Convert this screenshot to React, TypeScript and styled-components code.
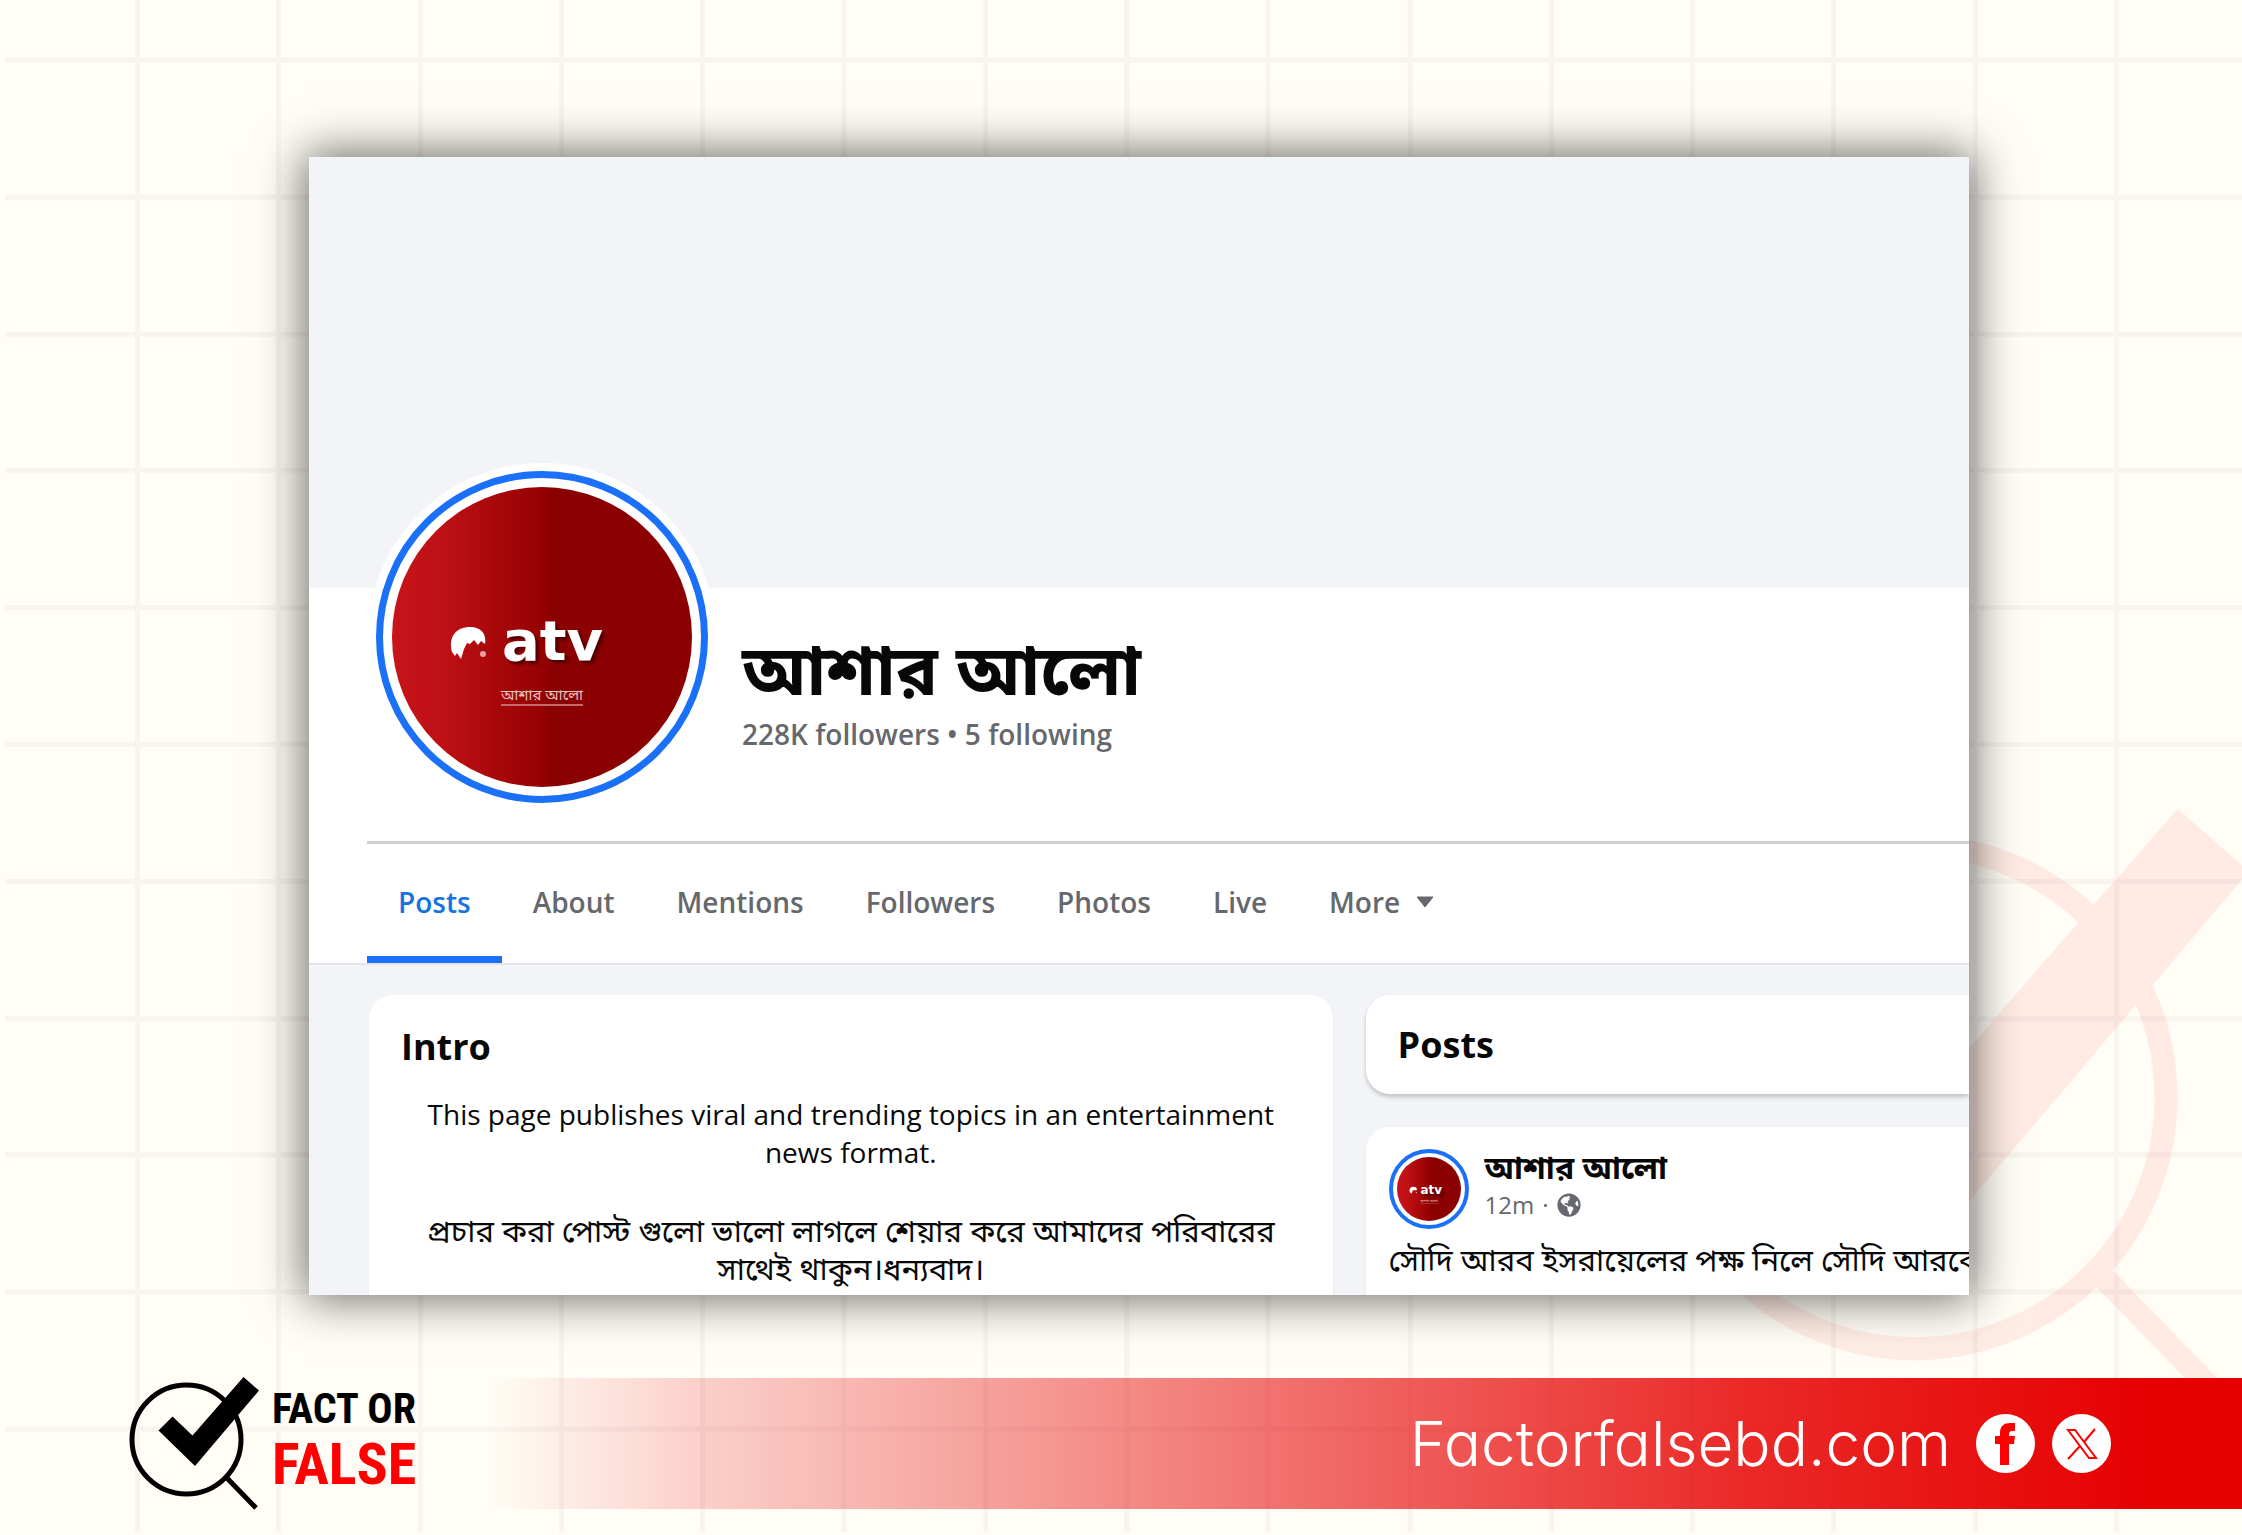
import React from "react";
import styled, { createGlobalStyle } from "styled-components";
import { FaGlobeAmericas } from "react-icons/fa";

const sans = `"Open Sans", "Noto Sans", "Noto Sans Bengali", "Liberation Sans", sans-serif`;

const GlobalStyle = createGlobalStyle`
  *, *::before, *::after { box-sizing: border-box; }
  body {
    margin: 0;
    background: #fffdf5;
    font-family: ${sans};
    color: #080809;
  }
  h1, h2, h3, p { margin: 0; }
  a { color: inherit; text-decoration: none; }
`;

const Page = styled.div`
  position: relative;
  display: flex;
  flex-direction: column;
  min-height: 100vh;
  padding: 157px 0 27px;
  overflow: hidden;
`;

const Backdrop = styled.svg`
  position: absolute;
  inset: 0;
  width: 100%;
  height: 100%;
`;

const Sheet = styled.main`
  position: relative;
  margin: 0 273px 0 309px;
  overflow: hidden;
  background: #f2f4f8;
  box-shadow: 0 0 44px 4px rgba(0, 0, 0, 0.58);
`;

const Cover = styled.div`
  height: 431px;
  background: #f2f4f8;
`;

const Header = styled.header`
  background: #fff;
  border-bottom: 2px solid #e3e5ea;
`;

const Profile = styled.div`
  display: flex;
  gap: 26px;
  padding: 0 32px 30px 59px;
`;

const AvatarRing = styled.div<{ $size: number; $ring: number; $gap: number; $edge: number }>`
  flex: none;
  display: flex;
  width: ${(p) => p.$size}px;
  height: ${(p) => p.$size}px;
  padding: ${(p) => p.$gap}px;
  border: ${(p) => p.$ring}px solid #1b70f8;
  border-radius: 50%;
  background: #fff;
  box-shadow: 0 0 0 ${(p) => p.$edge}px #fff;
`;

const ProfileAvatar = styled.div`
  margin-top: -125px;
  padding: 8px;
`;

const AvatarImage = styled.svg`
  width: 100%;
  height: 100%;
  border-radius: 50%;
`;

const Identity = styled.div`
  padding-top: 36px;
`;

const PageName = styled.h1`
  font-size: 70px;
  line-height: 88px;
  font-weight: 700;
`;

const Counts = styled.p`
  font-size: 28px;
  line-height: 44px;
  font-weight: 600;
  color: #65686c;
`;

const Tabs = styled.nav`
  display: flex;
  margin-left: 58px;
  border-top: 3px solid #ced0d4;
`;

const Tab = styled.a<{ $active?: boolean }>`
  display: flex;
  align-items: center;
  height: 119px;
  padding: 4px 31px 0;
  border-bottom: 7px solid ${(p) => (p.$active ? "#1b70f8" : "transparent")};
  font-size: 28px;
  line-height: 40px;
  font-weight: 600;
  color: ${(p) => (p.$active ? "#1673e0" : "#65686c")};
`;

const MoreTab = styled.button`
  display: flex;
  align-items: center;
  gap: 16px;
  height: 119px;
  padding: 4px 31px 0;
  border: 0;
  border-bottom: 7px solid transparent;
  background: none;
  font: 600 28px/40px ${sans};
  color: #65686c;
`;

const Columns = styled.div`
  display: grid;
  grid-template-columns: 963fr 603fr;
  gap: 33px;
  padding: 30px 0 0 60px;
`;

const Column = styled.div`
  display: flex;
  flex-direction: column;
  gap: 33px;
  min-width: 0;
`;

const Panel = styled.section<{ $open?: boolean; $side?: boolean }>`
  flex: ${(p) => (p.$open ? 1 : "none")};
  padding: ${(p) => (p.$side ? `22px 0 ${p.$open ? 10 : 22}px 23px` : "24px 32px 8px")};
  border-radius: ${(p) => (p.$side ? "24px 0 0 24px" : "24px")};
  ${(p) => p.$open && "border-bottom-left-radius: 0; border-bottom-right-radius: 0;"}
  background: #fff;
  box-shadow: 0 3px 4px rgba(0, 0, 0, ${(p) => (p.$open ? 0.04 : 0.2)});
`;

const PanelTitle = styled.h2<{ $inset?: boolean }>`
  padding-left: ${(p) => (p.$inset ? 9 : 0)}px;
  font-size: 36px;
  line-height: 55px;
  font-weight: 700;
`;

const Bio = styled.div`
  display: flex;
  flex-direction: column;
  gap: 40px;
  margin-top: 21px;
  font-size: 28px;
  line-height: 38px;
  text-align: center;
`;

const BengaliLine = styled.p`
  font-size: 31px;
`;

const PostHead = styled.div`
  display: flex;
  gap: 16px;
`;

const PostMeta = styled.div`
  display: flex;
  align-items: center;
  gap: 8px;
  font-size: 24px;
  line-height: 40px;
  color: #65686c;
`;

const PostAuthor = styled.h3`
  font-size: 32px;
  line-height: 36px;
  font-weight: 700;
`;

const PostText = styled.p`
  margin-top: 7px;
  font-size: 31px;
  line-height: 46px;
  white-space: nowrap;
  overflow: hidden;
`;

const Footer = styled.footer`
  position: relative;
  display: flex;
  margin-top: 83px;
`;

const Brand = styled.a`
  flex: none;
  display: flex;
  gap: 12px;
  width: 490px;
  padding-left: 129px;
`;

const BrandMark = styled.svg`
  width: 131px;
  height: 131px;
  overflow: visible;
`;

const BrandName = styled.span`
  display: flex;
  flex-direction: column;
  justify-content: center;
  padding-bottom: 10px;
  font-family: "Liberation Sans Narrow", "Roboto Condensed", "Liberation Sans", sans-serif;
  font-weight: 700;
  white-space: nowrap;
`;

const BrandFact = styled.span`
  font-size: 42px;
  line-height: 50px;
  color: #000;
`;

const BrandFalse = styled.span`
  font-size: 58px;
  line-height: 60px;
  color: #f00;
`;

const Band = styled.div`
  flex: 1;
  display: flex;
  align-items: center;
  justify-content: flex-end;
  gap: 17px;
  height: 131px;
  padding-right: 131px;
  background: linear-gradient(
    90deg,
    rgba(230, 0, 0, 0) 0%,
    rgba(230, 0, 0, 0.18) 12%,
    rgba(230, 0, 0, 0.62) 51%,
    rgba(230, 0, 0, 0.84) 72%,
    rgb(230, 0, 0) 95%
  );
`;

const Site = styled.a`
  margin-right: 8px;
  font-family: Inter, "Open Sans", sans-serif;
  font-feature-settings: "cv11";
  font-size: 62px;
  line-height: 72px;
  font-weight: 300;
  color: #fff;
`;

const Social = styled.a`
  display: flex;
  align-items: center;
  justify-content: center;
  width: 59px;
  height: 59px;
  border-radius: 50%;
  background: #fff;
  color: #f00;
`;

/* Magnifying glass with a tick, drawn on a 131 x 131 box */
function Mark() {
  return (
    <>
      <circle cx="57.5" cy="61.5" r="54.5" fill="none" stroke="currentColor" strokeWidth="5" />
      <path d="M114.5 -1 L130 12.5 L66 88 L29.5 52.5 L43.5 38.5 L63.5 57.5 Z" fill="currentColor" />
      <path d="M96 98 L127 130" stroke="currentColor" strokeWidth="5" />
    </>
  );
}

function AvatarArt({ id, label }: { id: string; label: string }) {
  return (
    <AvatarImage viewBox="0 0 300 300" role="img" aria-label={label}>
      <defs>
        <linearGradient id={id}>
          <stop offset="0" stopColor="#c8141a" />
          <stop offset="0.18" stopColor="#bd1015" />
          <stop offset="0.36" stopColor="#a60709" />
          <stop offset="0.5" stopColor="#960203" />
          <stop offset="0.53" stopColor="#8b0000" />
          <stop offset="1" stopColor="#8b0000" />
        </linearGradient>
      </defs>
      <rect width="300" height="300" fill={`url(#${id})`} />
      <path
        d="M60 165 C56 150 64 140 78 140 C89 140 95 147 93 157 L89 154 L86 158 L82 153 L78 157 L75 156 L72 162 L69 172 L65 166 L63 169 Z"
        fill="#fff"
      />
      <circle cx="91" cy="167" r="3" fill="#e8a0a0" />
      <g fontFamily="DejaVu Sans, sans-serif" fontWeight="700" fontSize="56">
        <text x="110" y="173" fill="#fff" style={{ textShadow: "3px 3px 3px #500000" }}>
          atv
        </text>
      </g>
      <text x="150" y="213" textAnchor="middle" fontFamily="Noto Sans Bengali, sans-serif" fontSize="15" fill="#e6c0c0">
        আশার আলো
      </text>
      <path d="M109 218 H191" stroke="#c46a6a" strokeWidth="2" />
    </AvatarImage>
  );
}

const columns = Array.from({ length: 15 }, (_, i) => 138 + Math.round((i * 1978) / 14));
const rows = Array.from({ length: 11 }, (_, i) => 60 + Math.round((i * 1368) / 10));

const tabs = ["Posts", "About", "Mentions", "Followers", "Photos", "Live"];

export default function App() {
  return (
    <Page>
      <GlobalStyle />
      <Backdrop viewBox="0 0 2242 1535" preserveAspectRatio="xMidYMid slice" aria-hidden="true">
        <g stroke="#f8f4ee">
          {rows.map((y) => (
            <path key={y} d={`M6 ${y} H2242`} strokeWidth="5" />
          ))}
          {columns.map((x) => (
            <path key={x} d={`M${x} 0 V1531`} strokeWidth="5" />
          ))}
        </g>
        <g color="#ff0000" opacity="0.065" transform="translate(1649 813) scale(4.61)">
          <Mark />
        </g>
      </Backdrop>

      <Sheet>
        <Cover />
        <Header>
          <Profile>
            <ProfileAvatar>
              <AvatarRing $size={332} $ring={7} $gap={9} $edge={8}>
                <AvatarArt id="profile-red" label="atv আশার আলো" />
              </AvatarRing>
            </ProfileAvatar>
            <Identity>
              <PageName>আশার আলো</PageName>
              <Counts>228K followers • 5 following</Counts>
            </Identity>
          </Profile>
          <Tabs>
            {tabs.map((name, i) => (
              <Tab key={name} href="#" $active={i === 0}>
                {name}
              </Tab>
            ))}
            <MoreTab type="button">
              More
              <svg width="18" height="12" viewBox="0 0 18 12" aria-hidden="true">
                <path d="M1 1 H17 L9 11 Z" fill="currentColor" stroke="currentColor" strokeLinejoin="round" />
              </svg>
            </MoreTab>
          </Tabs>
        </Header>

        <Columns>
          <Column>
            <Panel $open>
              <PanelTitle>Intro</PanelTitle>
              <Bio>
                <p>This page publishes viral and trending topics in an entertainment news format.</p>
                <BengaliLine>
                  প্রচার করা পোস্ট গুলো ভালো লাগলে শেয়ার করে আমাদের পরিবারের সাথেই থাকুন।ধন্যবাদ।
                </BengaliLine>
              </Bio>
            </Panel>
          </Column>
          <Column>
            <Panel $side>
              <PanelTitle $inset>Posts</PanelTitle>
            </Panel>
            <Panel as="article" $side $open>
              <PostHead>
                <AvatarRing $size={80} $ring={4} $gap={4} $edge={0}>
                  <AvatarArt id="post-red" label="atv" />
                </AvatarRing>
                <div>
                  <PostAuthor>আশার আলো</PostAuthor>
                  <PostMeta>
                    <span>12m</span>
                    <span>·</span>
                    <FaGlobeAmericas size={24} aria-label="Public" />
                  </PostMeta>
                </div>
              </PostHead>
              <PostText>সৌদি আরব ইসরায়েলের পক্ষ নিলে সৌদি আরবে</PostText>
            </Panel>
          </Column>
        </Columns>
      </Sheet>

      <Footer>
        <Brand href="#">
          <BrandMark viewBox="0 0 131 131" aria-hidden="true">
            <g color="#000">
              <Mark />
            </g>
          </BrandMark>
          <BrandName>
            <BrandFact>FACT OR</BrandFact>
            <BrandFalse>FALSE</BrandFalse>
          </BrandName>
        </Brand>
        <Band>
          <Site href="#">Factorfalsebd.com</Site>
          <Social href="#" aria-label="Facebook">
            <svg width="22" height="42" viewBox="0 0 22 42" aria-hidden="true">
              <path
                d="M5 42 V21 H0 V13 H5 V10 C5 3 9 0 15 0 H20 V8 H17 C15 8 14 9 14 11 V13 H20 L19 21 H14 V42 Z"
                fill="currentColor"
              />
            </svg>
          </Social>
          <Social href="#" aria-label="X">
            <svg width="32" height="32" viewBox="0 0 32 32" fill="none" stroke="currentColor" strokeWidth="2" aria-hidden="true">
              <path d="M2 2 H9 L30 30 H23 Z" />
              <path d="M29 1 L18 14 M14 18 L2 31" />
            </svg>
          </Social>
        </Band>
      </Footer>
    </Page>
  );
}
